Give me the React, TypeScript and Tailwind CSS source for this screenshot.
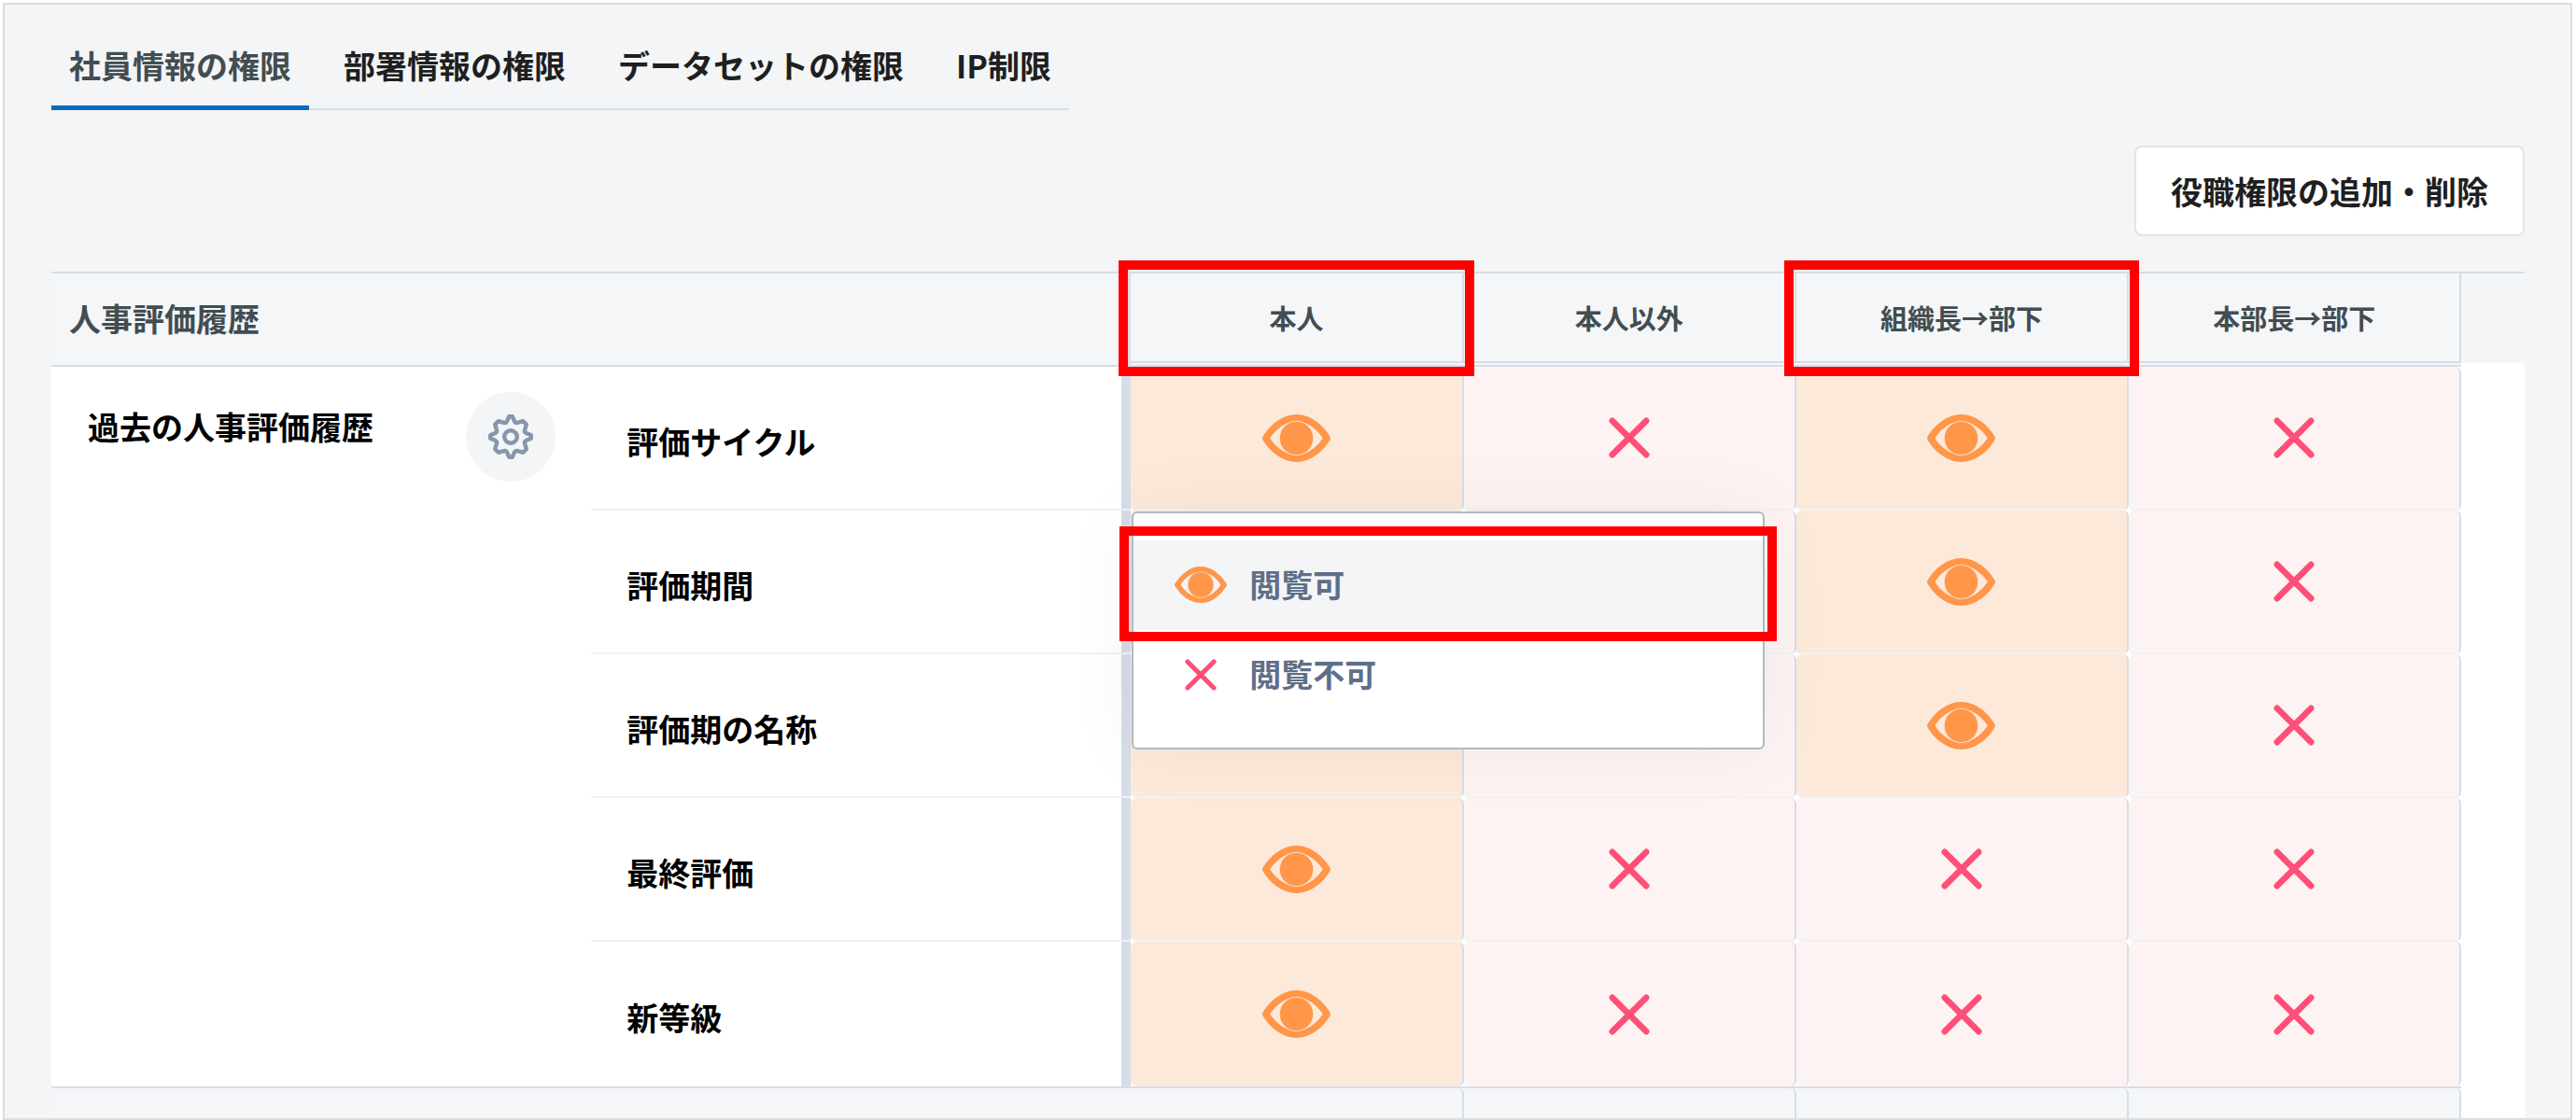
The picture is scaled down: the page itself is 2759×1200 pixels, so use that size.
import { useState } from 'react';
import clsx from 'clsx';

type Permission = 'view' | 'deny';

interface PermissionRow {
  name: string;
  values: Permission[];
}

const tabs = ['社員情報の権限', '部署情報の権限', 'データセットの権限', 'IP制限'];

const columns = [
  { label: '本人', marked: true },
  { label: '本人以外', marked: false },
  { label: '組織長→部下', marked: true },
  { label: '本部長→部下', marked: false },
];

const initialRows: PermissionRow[] = [
  { name: '評価サイクル', values: ['view', 'deny', 'view', 'deny'] },
  { name: '評価期間', values: ['view', 'deny', 'view', 'deny'] },
  { name: '評価期の名称', values: ['view', 'deny', 'view', 'deny'] },
  { name: '最終評価', values: ['view', 'deny', 'deny', 'deny'] },
  { name: '新等級', values: ['view', 'deny', 'deny', 'deny'] },
];

const options: { value: Permission; label: string }[] = [
  { value: 'view', label: '閲覧可' },
  { value: 'deny', label: '閲覧不可' },
];

function EyeIcon({ className }: { className?: string }) {
  return (
    <svg className={className} viewBox="0 0 73 51" fill="none" aria-hidden="true">
      <path
        d="M3.8 25.5C10 15 22 3.8 36.5 3.8S63 15 69.2 25.5C63 36 51 47.2 36.5 47.2S10 36 3.8 25.5Z"
        stroke="#ff9649"
        strokeWidth="7.4"
        strokeLinejoin="round"
      />
      <circle cx="36.5" cy="25.5" r="18.2" fill="#ff9649" stroke="#fde9da" strokeWidth="0.8" />
    </svg>
  );
}

function CrossIcon({ className }: { className?: string }) {
  return (
    <svg className={className} viewBox="0 0 44 44" fill="none" aria-hidden="true">
      <path d="M3.8 3.8L40.2 40.2M40.2 3.8L3.8 40.2" stroke="#ff4f78" strokeWidth="6.6" strokeLinecap="round" />
    </svg>
  );
}

function GearIcon({ className }: { className?: string }) {
  return (
    <svg className={className} viewBox="0 0 48 48" fill="none" stroke="#8497ad" strokeWidth="4.4" aria-hidden="true">
      <path
        d="M22.3 2.2H25.7L28.1 7.6Q29.2 9.6 31.4 8.9L37.2 7.2L40.8 10.8L39.1 16.6Q38.4 18.8 40.4 19.9L45.8 22.3V25.7L40.4 28.1Q38.4 29.2 39.1 31.4L40.8 37.2L37.2 40.8L31.4 39.1Q29.2 38.4 28.1 40.4L25.7 45.8H22.3L19.9 40.4Q18.8 38.4 16.6 39.1L10.8 40.8L7.2 37.2L8.9 31.4Q9.6 29.2 7.6 28.1L2.2 25.7V22.3L7.6 19.9Q9.6 18.8 8.9 16.6L7.2 10.8L10.8 7.2L16.6 8.9Q18.8 9.6 19.9 7.6Z"
        strokeLinejoin="round"
      />
      <circle cx="24" cy="24" r="6.8" />
    </svg>
  );
}

// Red frame that points out the part being explained
function Highlight({ className }: { className?: string }) {
  return <span className={clsx('pointer-events-none absolute z-20 border-10 border-[#ff0000]', className)} />;
}

function PermissionMenu({ onSelect }: { onSelect: (value: Permission) => void }) {
  return (
    <div
      role="menu"
      className="absolute top-full left-px z-10 mt-[3px] w-[678px] rounded-md border-2 border-[#b1b9bf] bg-white pt-[29px] pb-[30px] shadow-[0_0_80px_rgba(0,0,0,0.05)]"
    >
      {options.map(({ value, label }) => (
        <button
          key={value}
          type="button"
          role="menuitem"
          onClick={() => onSelect(value)}
          className={clsx(
            'relative flex h-24 w-full items-center gap-6 pl-11 text-[34px] leading-[48px] font-bold text-[#5f6f88]',
            value === 'view' && 'bg-[#f4f5f7]'
          )}
        >
          <span className="flex w-14 justify-center">
            {value === 'view' ? <EyeIcon className="w-14" /> : <CrossIcon className="w-[34px]" />}
          </span>
          <span className="pb-[2px]">{label}</span>
          {value === 'view' && <Highlight className="-inset-x-[15px] -top-[15px] -bottom-3" />}
        </button>
      ))}
    </div>
  );
}

export default function App() {
  const [activeTab, setActiveTab] = useState(tabs[0]);
  const [rows, setRows] = useState(initialRows);
  const [openCell, setOpenCell] = useState<string | null>('0-0');

  const handleSelect = (rowIndex: number, colIndex: number, value: Permission) => {
    setRows((prev) =>
      prev.map((row, i) =>
        i === rowIndex ? { ...row, values: row.values.map((v, j) => (j === colIndex ? value : v)) } : row
      )
    );
    setOpenCell(null);
  };

  return (
    <div className="bg-white pt-[3px] pr-1 pl-[3px] font-['Noto_Sans_CJK_JP',sans-serif]">
      <main className="border-2 border-[#dcdddf] bg-[#f3f5f7] pr-[49px] pl-[50px]">
        {/* Tabs */}
        <nav className="flex">
          <div role="tablist" className="flex gap-[18px] border-b-2 border-[#d6dde8]">
            {tabs.map((tab) => (
              <button
                key={tab}
                type="button"
                role="tab"
                aria-selected={tab === activeTab}
                onClick={() => setActiveTab(tab)}
                className={clsx(
                  '-mb-[2px] border-b-[5px] px-[19px] pt-10 pb-[18px] text-[34px] leading-[50px] font-bold',
                  tab === activeTab ? 'border-[#0b6bbd] text-[#424d52]' : 'border-transparent text-[#1f1f1f]'
                )}
              >
                {tab}
              </button>
            ))}
          </div>
        </nav>

        <div className="flex justify-end py-[38px]">
          <button
            type="button"
            className="rounded-lg border-2 border-[#dfe4e9] bg-white px-[37px] py-[21px] text-[34px] leading-[51px] font-bold text-[#1f1f1f]"
          >
            役職権限の追加・削除
          </button>
        </div>

        {/* Permission table */}
        <table className="w-full table-fixed border-separate border-spacing-0 bg-white">
          <colgroup>
            <col className="w-[21.83%]" />
            <col className="w-[21.82%]" />
            <col className="w-[13.45%]" />
            <col className="w-[13.45%]" />
            <col className="w-[13.45%]" />
            <col className="w-[13.45%]" />
            <col />
          </colgroup>
          <thead>
            <tr>
              <th
                colSpan={2}
                scope="colgroup"
                className="border-y-2 border-[#d6dde8] bg-[#f4f6f8] pb-[3px] pl-[19px] text-left text-[34px] leading-[50px] font-bold text-[#424d52] shadow-[inset_-10px_0_0_#d6dde8]"
              >
                人事評価履歴
              </th>
              {columns.map((column) => (
                <th key={column.label} scope="col" className="relative border-y-2 border-[#d6dde8] bg-[#f4f6f8] p-0 pb-[2px]">
                  <div className="flex h-24 items-center justify-center border-r-2 border-b-2 border-[#d6dde8] text-[29px] leading-[42px] font-bold text-[#424d52]">
                    {column.label}
                  </div>
                  {column.marked && <Highlight className="-top-[14px] -right-[11px] -bottom-3 -left-[13px]" />}
                </th>
              ))}
              <td className="border-t-2 border-[#d6dde8] p-0 align-top">
                <div className="h-24 bg-[#f4f5f7]" />
              </td>
            </tr>
          </thead>
          <tbody>
            {rows.map((row, rowIndex) => {
              const isLast = rowIndex === rows.length - 1;
              return (
                <tr key={row.name}>
                  {rowIndex === 0 && (
                    <th rowSpan={rows.length} scope="rowgroup" className="pt-[27px] pr-[38px] pl-[39px] text-left align-top">
                      <div className="flex items-start justify-between">
                        <span className="text-[34px] leading-[74px] font-bold text-black">過去の人事評価履歴</span>
                        <button
                          type="button"
                          aria-label="設定"
                          className="flex size-24 shrink-0 items-center justify-center rounded-full bg-[#f3f5f7]"
                        >
                          <GearIcon className="size-12" />
                        </button>
                      </div>
                    </th>
                  )}
                  <th
                    scope="row"
                    className={clsx(
                      'pt-[7px] pl-[38px] text-left text-[34px] leading-[50px] font-bold text-black shadow-[inset_-10px_0_0_#d6dde8]',
                      !isLast && 'border-b-2 border-[#f1f2f4]'
                    )}
                  >
                    {row.name}
                  </th>
                  {row.values.map((value, colIndex) => {
                    const cellKey = `${rowIndex}-${colIndex}`;
                    return (
                      <td
                        key={cellKey}
                        className={clsx(
                          'relative rounded-md border-r-2 border-r-[#d6dde8] p-0',
                          !isLast && 'border-b-2 border-b-[#f0f2f5]',
                          value === 'view' ? 'bg-[#fde9da]' : 'bg-[#fdf3f2]'
                        )}
                      >
                        <button
                          type="button"
                          aria-label={`${row.name} ${columns[colIndex].label}`}
                          aria-haspopup="menu"
                          onClick={() => setOpenCell(openCell === cellKey ? null : cellKey)}
                          className={clsx('flex w-full items-center justify-center', isLast ? 'h-[155px]' : 'h-[152px]')}
                        >
                          {value === 'view' ? <EyeIcon className="w-[73px]" /> : <CrossIcon className="w-11" />}
                        </button>
                        {openCell === cellKey && (
                          <PermissionMenu onSelect={(next) => handleSelect(rowIndex, colIndex, next)} />
                        )}
                      </td>
                    );
                  })}
                  <td />
                </tr>
              );
            })}
            {/* Next section */}
            <tr>
              <td colSpan={2} className="border-t-2 border-[#d6dde8] bg-[#f4f6f8]" />
              {columns.map((column) => (
                <td key={column.label} className="border-t-2 border-[#d6dde8] bg-[#f4f6f8] p-0">
                  <div className="h-8 rounded-tr-md border-r-2 border-[#d6dde8]" />
                </td>
              ))}
              <td />
            </tr>
          </tbody>
        </table>
      </main>
    </div>
  );
}
